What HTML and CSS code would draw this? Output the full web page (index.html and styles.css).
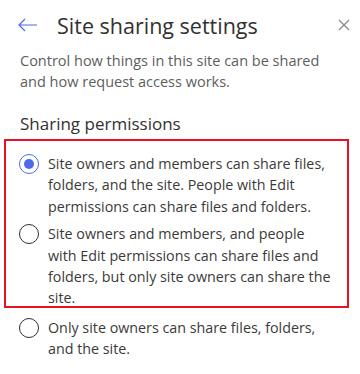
FILE: index.html
```html
<!DOCTYPE html>
<html>
<head>
  <link rel="stylesheet" href="styles.css">
</head>
<body>
  <div class="panel">
    <div class="header">
      <button class="icon-btn back" aria-label="Back">
        <svg width="20" height="14" viewBox="0 0 20 14"><path d="M7 1 L1 7 L7 13 M1 7 H19" fill="none" stroke="#4f6bed" stroke-width="1.2"/></svg>
      </button>
      <h2 class="title">Site sharing settings</h2>
      <button class="icon-btn close" aria-label="Close">
        <svg width="12" height="12" viewBox="0 0 12 12"><path d="M1 1 L11 11 M11 1 L1 11" fill="none" stroke="#8a8886" stroke-width="1.2"/></svg>
      </button>
    </div>

    <p class="desc">Control how things in this site can be shared and how request access works.</p>

    <h3 class="section">Sharing permissions</h3>

    <div class="highlight">
      <label class="option">
        <span class="radio checked"></span>
        <span class="opt-text">Site owners and members can share files, folders, and the site. People with Edit permissions can share files and folders.</span>
      </label>
      <label class="option">
        <span class="radio"></span>
        <span class="opt-text">Site owners and members, and people with Edit permissions can share files and folders, but only site owners can share the site.</span>
      </label>
    </div>

    <label class="option last">
      <span class="radio"></span>
      <span class="opt-text">Only site owners can share files, folders, and the site.</span>
    </label>
  </div>
</body>
</html>
```

FILE: styles.css
```css
body {
  margin: 0;
  background: #fff;
  font-family: "Open Sans", "Noto Sans", sans-serif;
  color: #323130;
}

.panel {
  padding-top: 8px;
}

.header {
  display: flex;
  align-items: center;
  height: 34px;
  padding: 0 10px 0 18px;
}

.icon-btn {
  background: none;
  border: none;
  padding: 0;
  display: flex;
  cursor: pointer;
}

.back {
  margin-right: 19px;
}

.title {
  flex: 1;
  margin: 0;
  font-size: 21.5px;
  font-weight: 400;
  color: #323130;
}

.desc {
  margin: 8px 0 0 20px;
  width: 310px;
  font-size: 14.5px;
  line-height: 21px;
  color: #605e5c;
}

.section {
  margin: 20px 0 0 20px;
  font-size: 17px;
  font-weight: 400;
  line-height: 24px;
  color: #323130;
}

.highlight {
  margin: 3px 11px 0 4px;
  border: 2px solid #e81123;
  padding: 12px 0 0 13px;
}

.option {
  display: flex;
  gap: 9px;
  margin-bottom: 6px;
  font-size: 14.3px;
  line-height: 21.4px;
  color: #3b3a39;
  cursor: pointer;
}

.highlight .option:last-child {
  margin-bottom: -3px;
}

.option.last {
  margin: 9px 10px 0 19px;
}

.radio {
  flex: none;
  box-sizing: border-box;
  width: 20px;
  height: 20px;
  margin-top: 1px;
  border: 1px solid #323130;
  border-radius: 50%;
  position: relative;
}

.radio.checked {
  border-color: #4f6bed;
}

.radio.checked::after {
  content: "";
  position: absolute;
  left: 4px;
  top: 4px;
  width: 10px;
  height: 10px;
  border-radius: 50%;
  background: #4f6bed;
}

.opt-text {
  width: 287px;
}
```
